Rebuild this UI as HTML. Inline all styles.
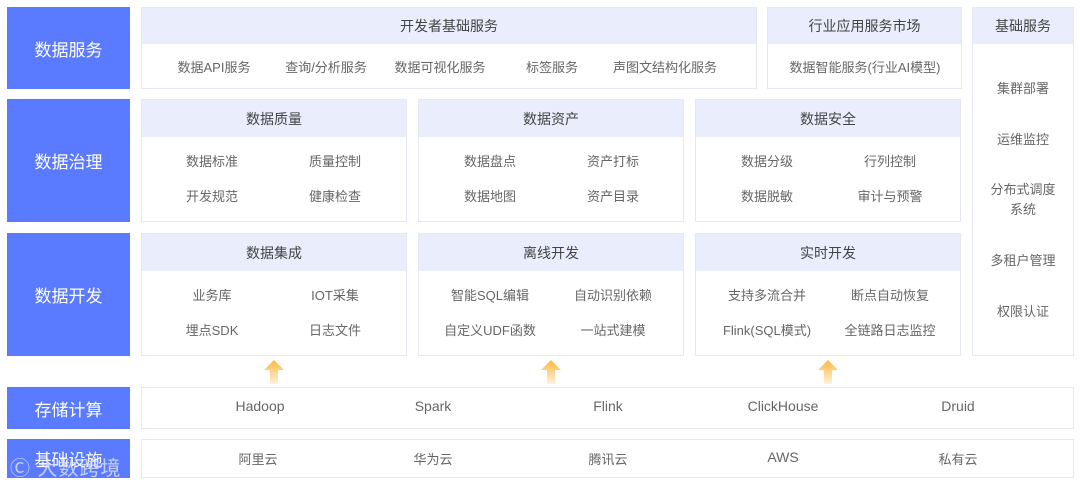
<!DOCTYPE html>
<html><head><meta charset="utf-8"><style>
*{margin:0;padding:0;box-sizing:border-box}
body{width:1080px;height:486px;background:#fff;font-family:"Liberation Sans","Noto Sans CJK SC",sans-serif;position:relative;overflow:hidden;color:#555}
.a{position:absolute}
.blue{background:#5a7bff;color:#fff;font-size:17px;display:flex;align-items:center;justify-content:center}
.box{border:1px solid #e6e9f2;background:#fff}
.hd{background:#e9edfc;color:#444;font-size:14px;display:flex;align-items:center;justify-content:center}
.t{position:absolute;font-size:13px;color:#666;white-space:nowrap;transform:translate(-50%,-2px)}
.arrow{position:absolute;width:20px;height:24px}
</style></head><body>
<div class="a blue" style="left:7px;top:7px;width:123px;height:82px">数据服务</div>
<div class="a blue" style="left:7px;top:99px;width:123px;height:123px">数据治理</div>
<div class="a blue" style="left:7px;top:233px;width:123px;height:123px">数据开发</div>
<div class="a blue" style="left:7px;top:387px;width:123px;height:42px">存储计算</div>
<div class="a blue" style="left:7px;top:439px;width:123px;height:39px">基础设施</div>

<div class="a box" style="left:141px;top:7px;width:616px;height:82px"><div class="hd" style="height:36px">开发者基础服务</div></div>
<div class="t" style="left:214px;top:59px">数据API服务</div>
<div class="t" style="left:326px;top:59px">查询/分析服务</div>
<div class="t" style="left:440px;top:59px">数据可视化服务</div>
<div class="t" style="left:552px;top:59px">标签服务</div>
<div class="t" style="left:665px;top:59px">声图文结构化服务</div>

<div class="a box" style="left:767px;top:7px;width:195px;height:82px"><div class="hd" style="height:36px">行业应用服务市场</div></div>
<div class="t" style="left:865px;top:59px">数据智能服务(行业AI模型)</div>

<div class="a box" style="left:972px;top:7px;width:102px;height:349px"><div class="hd" style="height:36px">基础服务</div></div>
<div class="t" style="left:1023px;top:80px">集群部署</div>
<div class="t" style="left:1023px;top:131px">运维监控</div>
<div class="t" style="left:1023px;top:182px;text-align:center;line-height:20px">分布式调度<br>系统</div>
<div class="t" style="left:1023px;top:252px">多租户管理</div>
<div class="t" style="left:1023px;top:303px">权限认证</div>

<div class="a box" style="left:141px;top:99px;width:266px;height:123px"><div class="hd" style="height:37px">数据质量</div></div>
<div class="a box" style="left:418px;top:99px;width:266px;height:123px"><div class="hd" style="height:37px">数据资产</div></div>
<div class="a box" style="left:695px;top:99px;width:266px;height:123px"><div class="hd" style="height:37px">数据安全</div></div>
<div class="t" style="left:212px;top:153px">数据标准</div><div class="t" style="left:335px;top:153px">质量控制</div>
<div class="t" style="left:212px;top:188px">开发规范</div><div class="t" style="left:335px;top:188px">健康检查</div>
<div class="t" style="left:490px;top:153px">数据盘点</div><div class="t" style="left:613px;top:153px">资产打标</div>
<div class="t" style="left:490px;top:188px">数据地图</div><div class="t" style="left:613px;top:188px">资产目录</div>
<div class="t" style="left:767px;top:153px">数据分级</div><div class="t" style="left:890px;top:153px">行列控制</div>
<div class="t" style="left:767px;top:188px">数据脱敏</div><div class="t" style="left:890px;top:188px">审计与预警</div>

<div class="a box" style="left:141px;top:233px;width:266px;height:123px"><div class="hd" style="height:37px">数据集成</div></div>
<div class="a box" style="left:418px;top:233px;width:266px;height:123px"><div class="hd" style="height:37px">离线开发</div></div>
<div class="a box" style="left:695px;top:233px;width:266px;height:123px"><div class="hd" style="height:37px">实时开发</div></div>
<div class="t" style="left:212px;top:287px">业务库</div><div class="t" style="left:335px;top:287px">IOT采集</div>
<div class="t" style="left:212px;top:322px">埋点SDK</div><div class="t" style="left:335px;top:322px">日志文件</div>
<div class="t" style="left:490px;top:287px">智能SQL编辑</div><div class="t" style="left:613px;top:287px">自动识别依赖</div>
<div class="t" style="left:490px;top:322px">自定义UDF函数</div><div class="t" style="left:613px;top:322px">一站式建模</div>
<div class="t" style="left:767px;top:287px">支持多流合并</div><div class="t" style="left:890px;top:287px">断点自动恢复</div>
<div class="t" style="left:767px;top:322px">Flink(SQL模式)</div><div class="t" style="left:890px;top:322px">全链路日志监控</div>

<svg class="arrow" style="left:264px;top:360px" viewBox="0 0 20 24"><defs><linearGradient id="g" x1="0" y1="0" x2="0" y2="1"><stop offset="0" stop-color="#ffb640"/><stop offset="1" stop-color="#fff3dc"/></linearGradient></defs><path d="M10 0L20 10H14V24H6V10H0Z" fill="url(#g)"/></svg>
<svg class="arrow" style="left:541px;top:360px" viewBox="0 0 20 24"><path d="M10 0L20 10H14V24H6V10H0Z" fill="url(#g)"/></svg>
<svg class="arrow" style="left:818px;top:360px" viewBox="0 0 20 24"><path d="M10 0L20 10H14V24H6V10H0Z" fill="url(#g)"/></svg>

<div class="a box" style="left:141px;top:387px;width:933px;height:42px"></div>
<div class="t" style="left:260px;top:400px;font-size:14px">Hadoop</div>
<div class="t" style="left:433px;top:400px;font-size:14px">Spark</div>
<div class="t" style="left:608px;top:400px;font-size:14px">Flink</div>
<div class="t" style="left:783px;top:400px;font-size:14px">ClickHouse</div>
<div class="t" style="left:958px;top:400px;font-size:14px">Druid</div>

<div class="a box" style="left:141px;top:439px;width:933px;height:39px"></div>
<div class="t" style="left:258px;top:451px">阿里云</div>
<div class="t" style="left:433px;top:451px">华为云</div>
<div class="t" style="left:608px;top:451px">腾讯云</div>
<div class="t" style="left:783px;top:451px;font-size:14px">AWS</div>
<div class="t" style="left:958px;top:451px">私有云</div>
<div class="a" style="left:10px;top:452px;font-size:20px;color:rgba(225,230,245,0.8);letter-spacing:1px">Ⓒ 大数跨境</div>
</body></html>
